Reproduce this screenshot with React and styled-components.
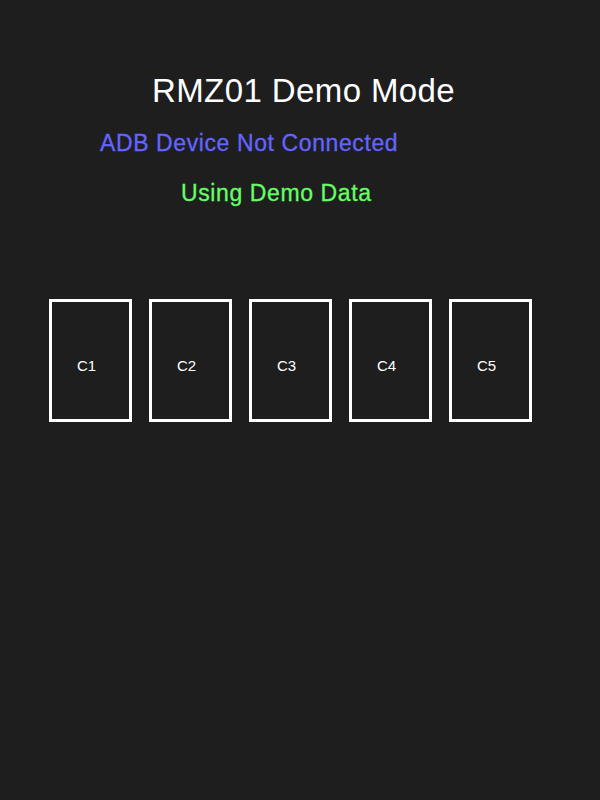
import styled, { createGlobalStyle } from 'styled-components';

const Global = createGlobalStyle`
  html, body { margin: 0; padding: 0; background: #1e1e1e; }
  body { width: 600px; height: 800px; overflow: hidden; }
`;

const Screen = styled.main`
  width: 600px; height: 800px; box-sizing: border-box; background: #1e1e1e;
  padding-top: 74px; display: flex; flex-direction: column;
  font-family: "Liberation Sans", Arial, sans-serif;
`;

const Title = styled.h1`
  margin: 0; padding-left: 152px;
  color: #ffffff; font-weight: 400; font-size: 33px; line-height: 33px; letter-spacing: 0.4px;
`;

const Status = styled.div`
  margin-top: ${p => p.$gap}px; padding-left: ${p => p.$indent}px;
  color: ${p => p.$color}; font-size: 23px; line-height: 23px; letter-spacing: 0.6px;
  -webkit-text-stroke: 0.3px ${p => p.$color};
`;

const Slots = styled.div`
  margin-top: 94px; padding-left: 49px;
  display: flex; gap: 17px;
`;

const Slot = styled.div`
  width: 83px; height: 123px; box-sizing: border-box;
  border: 3px solid #ffffff;
  padding: 56px 0 0 25px;
  color: #ffffff; font-size: 15px; line-height: 15px;
`;

const slots = ['C1', 'C2', 'C3', 'C4', 'C5'];

export default function App() {
  return (
    <>
      <Global />
      <Screen>
        <Title>RMZ01 Demo Mode</Title>
        <Status $gap={25} $indent={100} $color="#6464ff">ADB Device Not Connected</Status>
        <Status $gap={27} $indent={181} $color="#64ff64">Using Demo Data</Status>
        <Slots>
          {slots.map(s => <Slot key={s}>{s}</Slot>)}
        </Slots>
      </Screen>
    </>
  );
}
